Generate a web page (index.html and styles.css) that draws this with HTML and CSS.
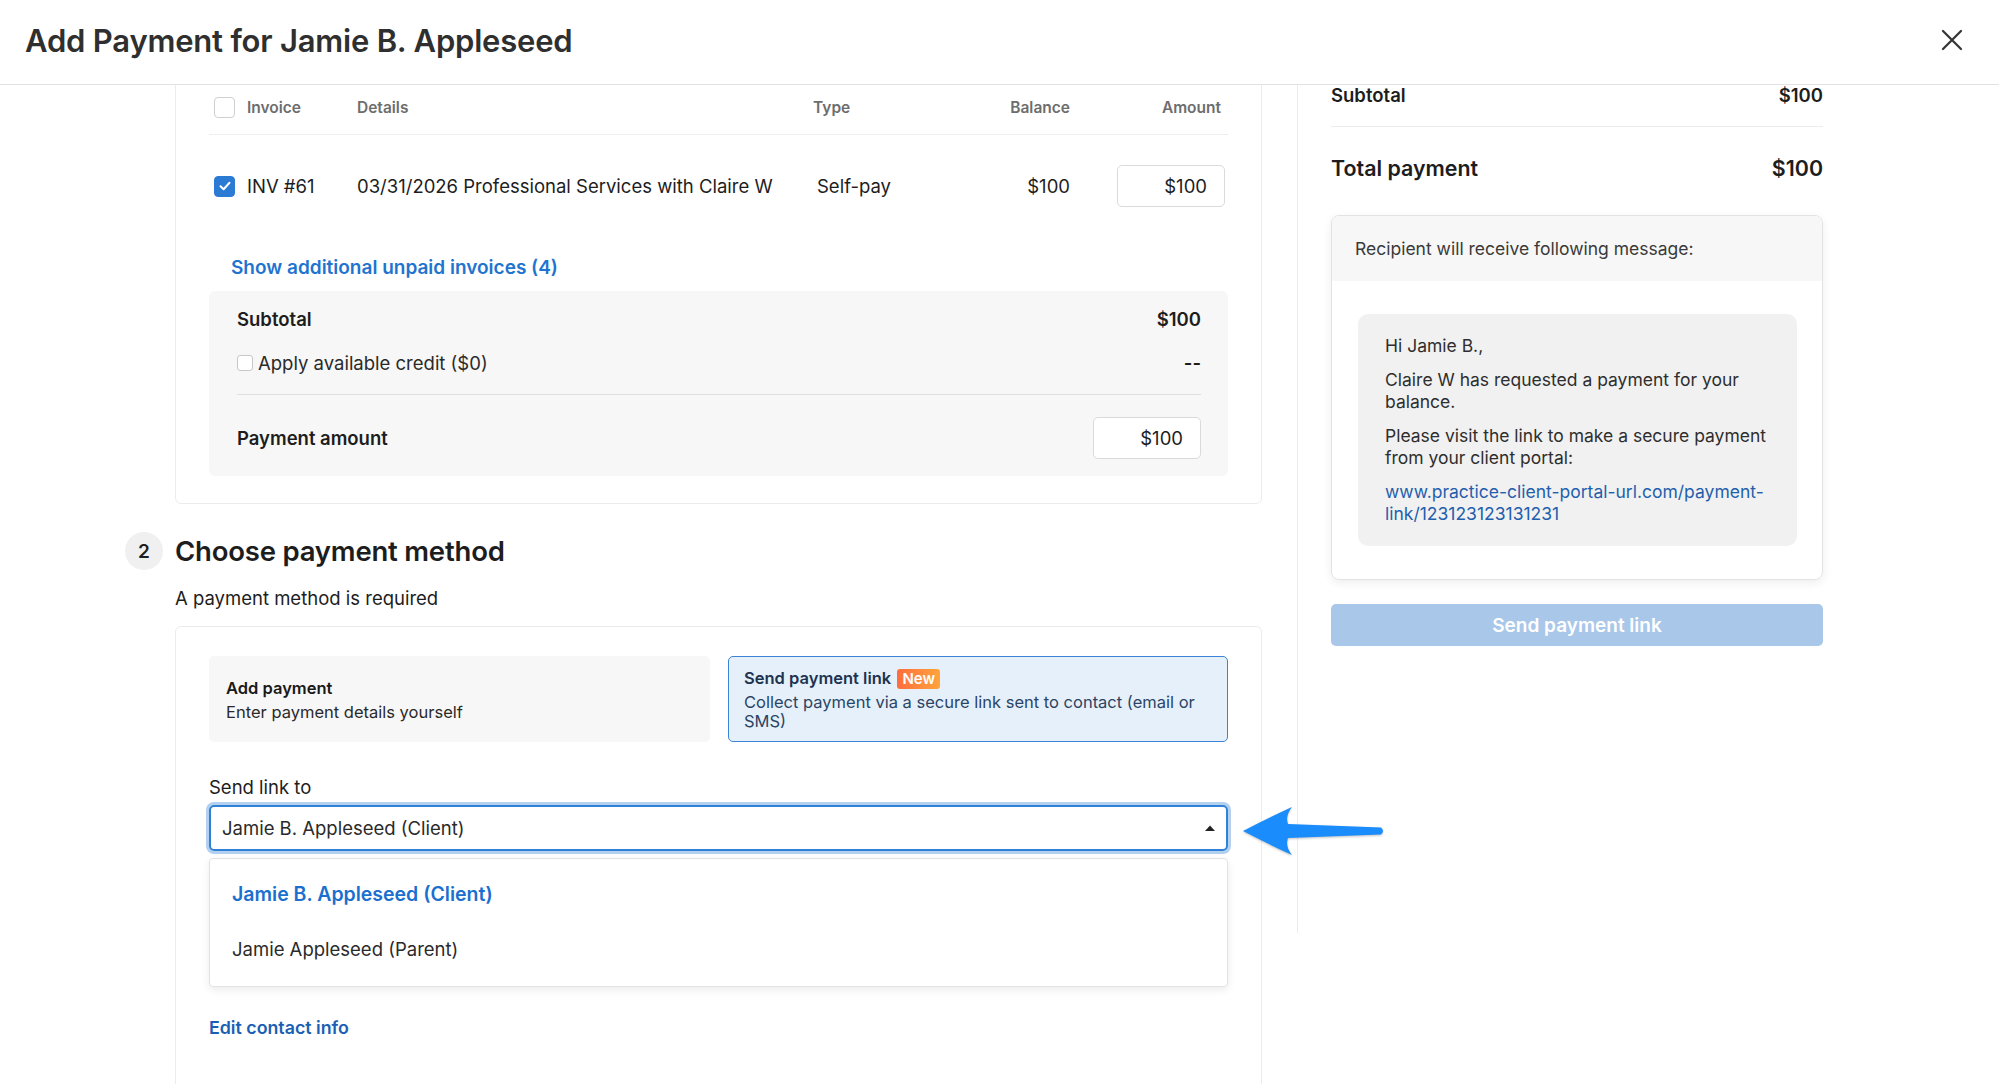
FILE: index.html
```html
<!DOCTYPE html>
<html lang="en">
<head>
    <meta charset="UTF-8">
    <meta name="viewport" content="width=device-width, initial-scale=1.0">
    <title>Add Payment for Jamie B. Appleseed</title>
    <link rel="stylesheet" href="styles.css">
</head>
<body>
    <header class="modal-header">
        <h1>Add Payment for Jamie B. Appleseed</h1>
        <button class="close-btn" aria-label="Close">
            <svg width="22" height="22" viewBox="0 0 22 22"><path d="M2 2 L20 20 M20 2 L2 20" stroke="#333" stroke-width="2.2" stroke-linecap="round"/></svg>
        </button>
    </header>

    <div class="layout">
        <main class="pane">
            <div class="pane-scroll">
                <!-- step 1: invoices -->
                <section class="card invoices">
                    <div class="inv-row inv-head">
                        <span class="cb"></span>
                        <span>Invoice</span>
                        <span>Details</span>
                        <span>Type</span>
                        <span class="num">Balance</span>
                        <span class="num amount-head">Amount</span>
                    </div>
                    <div class="inv-row inv-line">
                        <span class="cb checked">
                            <svg width="14" height="14" viewBox="0 0 14 14"><path d="M2.5 7.2 L5.6 10.2 L11.5 3.8" fill="none" stroke="#fff" stroke-width="2" stroke-linecap="round" stroke-linejoin="round"/></svg>
                        </span>
                        <span>INV #61</span>
                        <span>03/31/2026 Professional Services with Claire W</span>
                        <span class="type">Self-pay</span>
                        <span class="num">$100</span>
                        <span class="num"><span class="money-input">$100</span></span>
                    </div>

                    <a class="more-link" href="#">Show additional unpaid invoices (4)</a>

                    <div class="summary">
                        <div class="sum-row strong">
                            <span>Subtotal</span>
                            <span>$100</span>
                        </div>
                        <div class="sum-row credit">
                            <label><span class="cb small"></span>Apply available credit ($0)</label>
                            <span class="dash">--</span>
                        </div>
                        <div class="sum-row pay">
                            <span>Payment amount</span>
                            <span class="money-input">$100</span>
                        </div>
                    </div>
                </section>

                <!-- step 2: payment method -->
                <div class="step">
                    <span class="step-num">2</span>
                    <h2>Choose payment method</h2>
                </div>
                <p class="step-note">A payment method is required</p>

                <section class="card method">
                    <div class="options">
                        <div class="option">
                            <strong>Add payment</strong>
                            <span>Enter payment details yourself</span>
                        </div>
                        <div class="option selected">
                            <strong>Send payment link <em class="badge">New</em></strong>
                            <span>Collect payment via a secure link sent to contact (email or SMS)</span>
                        </div>
                    </div>

                    <div class="field-label">Send link to</div>
                    <div class="select">
                        <span>Jamie B. Appleseed (Client)</span>
                        <svg width="12" height="8" viewBox="0 0 12 8"><path d="M1 7 L6 1.5 L11 7 Z" fill="#222"/></svg>
                    </div>
                    <ul class="menu">
                        <li class="active">Jamie B. Appleseed (Client)</li>
                        <li>Jamie Appleseed (Parent)</li>
                    </ul>

                    <a class="edit-link" href="#">Edit contact info</a>
                </section>
            </div>
        </main>

        <aside class="side">
            <div class="side-inner">
                <div class="side-row sub">
                    <span>Subtotal</span>
                    <span>$100</span>
                </div>
                <div class="side-row total">
                    <span>Total payment</span>
                    <span>$100</span>
                </div>

                <div class="preview">
                    <div class="preview-head">Recipient will receive following message:</div>
                    <div class="preview-body">
                        <div class="message">
                            <p>Hi Jamie B.,</p>
                            <p>Claire W has requested a payment for your balance.</p>
                            <p>Please visit the link to make a secure payment from your client portal:</p>
                            <p><a href="#">www.practice-client-portal-url.com/payment-link/123123123131231</a></p>
                        </div>
                    </div>
                </div>

                <button class="send-btn" disabled>Send payment link</button>
            </div>
        </aside>
    </div>

    <!-- pointer arrow next to the contact select -->
    <svg class="pointer" width="150" height="62" viewBox="0 0 150 62">
        <path d="M5 31 Q30 18 54 7 Q47 16 50 24 L143 27.5 Q147 31 143 34.5 L50 38 Q47 46 54 55 Q30 44 5 31 Z" fill="#1a8cfb"/>
    </svg>
</body>
</html>
```

FILE: styles.css
```css
body {
    margin: 0;
    font-family: "Inter", "Liberation Sans", sans-serif;
    color: #1d1d1d;
    background: #fff;
}
.modal-header {
    height: 84px;
    border-bottom: 1px solid #e2e2e2;
    display: flex;
    align-items: center;
    justify-content: space-between;
    padding: 0 36px 0 25px;
}
.modal-header h1 {
    margin: 0 0 3px;
    font-size: 31px;
    font-weight: 600;
    color: #2f2f2f;
    letter-spacing: -0.2px;
}
.close-btn {
    border: 0;
    background: none;
    padding: 0;
    width: 22px;
    height: 22px;
    margin-bottom: 4px;
}
.layout {
    display: flex;
    height: calc(100vh - 85px);
    overflow: hidden;
}
.pane {
    flex: 0 0 1297px;
    overflow: hidden;
}
.pane-scroll {
    margin-top: -20px;
    padding: 0 35px 0 125px;
}
.card {
    margin-left: 50px;
    border: 1px solid #ececec;
    border-radius: 6px;
}
.invoices {
    padding: 14px 33px 27px;
}

/* invoice table */
.inv-row {
    display: grid;
    grid-template-columns: 33px 110px 456px 187px 70px 1fr;
    align-items: center;
    padding: 0 3px 0 5px;
    font-size: 18.5px;
}
.inv-head {
    height: 54px;
    border-bottom: 1px solid #eeeeee;
    font-size: 15.5px;
    font-weight: 600;
    color: #6d6d6d;
}
.inv-line {
    height: 102px;
}
.num {
    text-align: right;
}
.amount-head {
    padding-right: 4px;
}
.type {
    padding-left: 4px;
}
.cb {
    display: inline-flex;
    align-items: center;
    justify-content: center;
    width: 19px;
    height: 19px;
    border: 1.5px solid #cfcfcf;
    border-radius: 4px;
    background: #fff;
}
.cb.checked {
    background: #2b7bd4;
    border-color: #2b7bd4;
}
.cb.small {
    width: 14px;
    height: 14px;
    border: 1px solid #c8c8c8;
    border-radius: 3px;
    margin-right: 5px;
}
.money-input {
    display: inline-block;
    box-sizing: border-box;
    width: 108px;
    height: 42px;
    line-height: 40px;
    padding-right: 17px;
    border: 1px solid #dadada;
    border-radius: 5px;
    background: #fff;
    text-align: right;
    font-weight: 400;
}
.more-link {
    display: block;
    margin: 20px 0 0 22px;
    line-height: 22px;
    font-size: 19px;
    font-weight: 600;
    color: #1f74cf;
    text-decoration: none;
}
.summary {
    margin-top: 12px;
    background: #f7f7f7;
    border-radius: 6px;
    padding: 16px 27px 17px 28px;
    font-size: 18.5px;
}
.sum-row {
    display: flex;
    justify-content: space-between;
    align-items: center;
    line-height: 24px;
}
.sum-row.strong {
    font-weight: 600;
}
.sum-row.credit {
    margin-top: 20px;
    padding-bottom: 19px;
    border-bottom: 1px solid #e0e0e0;
}
.sum-row.credit label {
    display: flex;
    align-items: center;
    color: #2a2a2a;
}
.dash {
    font-weight: 600;
}
.sum-row.pay {
    margin-top: 22px;
    font-weight: 600;
}

/* step heading */
.step {
    display: flex;
    align-items: center;
    gap: 12px;
    margin-top: 28px;
}
.step-num {
    width: 38px;
    height: 38px;
    border-radius: 50%;
    background: #f0f0f0;
    display: flex;
    align-items: center;
    justify-content: center;
    font-size: 19px;
    font-weight: 600;
}
.step h2 {
    margin: 0;
    font-size: 27.5px;
    font-weight: 600;
    line-height: 38px;
    letter-spacing: -0.2px;
}
.step-note {
    margin: 16px 0 0 50px;
    line-height: 24px;
    font-size: 18.5px;
}
.method {
    margin-top: 16px;
    padding: 29px 33px 60px;
}
.options {
    display: grid;
    grid-template-columns: 1fr 1fr;
    gap: 18px;
}
.option {
    box-sizing: border-box;
    height: 86px;
    display: flex;
    flex-direction: column;
    justify-content: center;
    gap: 4px;
    padding: 0 24px 0 17px;
    background: #f7f7f7;
    border-radius: 5px;
    font-size: 16.5px;
    color: #2a2a2a;
}
.option strong {
    line-height: 22px;
    font-weight: 600;
    color: #1a1a1a;
}
.option span {
    line-height: 19px;
}
.option.selected {
    background: #e6f0fa;
    border: 1.5px solid #3b83d4;
    padding-left: 15.5px;
    color: #2b4565;
}
.option.selected strong {
    color: #1d3350;
}
.badge {
    display: inline-block;
    font-style: normal;
    font-size: 15px;
    font-weight: 600;
    line-height: 20px;
    padding: 0 5px;
    margin-left: 2px;
    border-radius: 3px;
    color: #fff;
    background: linear-gradient(90deg, #ff6d3d, #ffa43b);
}
.field-label {
    margin-top: 33px;
    line-height: 24px;
    font-size: 18.5px;
}
.select {
    margin-top: 6px;
    box-sizing: border-box;
    height: 46px;
    border: 2px solid #2f80d6;
    border-radius: 5px;
    box-shadow: 0 0 0 3px #b3d0ef;
    display: flex;
    align-items: center;
    justify-content: space-between;
    padding: 0 10px 0 11px;
    font-size: 18.5px;
    color: #2a2a2a;
}
.menu {
    list-style: none;
    margin: 7px 0 0;
    padding: 8px 0 9px;
    border: 1px solid #e2e2e2;
    border-radius: 4px;
    box-shadow: 0 3px 8px rgba(0, 0, 0, 0.08);
    font-size: 18.5px;
}
.menu li {
    height: 55px;
    line-height: 55px;
    padding-left: 22px;
    color: #2a2a2a;
}
.menu li.active {
    color: #1b6fce;
    font-size: 19.5px;
    font-weight: 600;
}
.edit-link {
    display: block;
    margin-top: 29px;
    line-height: 24px;
    font-size: 17.8px;
    font-weight: 600;
    color: #1a5fb4;
    text-decoration: none;
}

/* right summary column */
.side {
    flex: 1;
    align-self: flex-start;
    height: 848px;
    border-left: 1px solid #ececec;
    overflow: hidden;
}
.side-inner {
    width: 492px;
    margin: 0 0 0 33px;
}
.side-row {
    display: flex;
    justify-content: space-between;
    font-weight: 600;
}
.side-row.sub {
    line-height: 20px;
    font-size: 18.5px;
    padding-bottom: 21px;
    border-bottom: 1px solid #ececec;
}
.side-row.total {
    margin-top: 27px;
    line-height: 28px;
    font-size: 21.4px;
}
.preview {
    margin-top: 33px;
    border: 1px solid #e3e3e3;
    border-radius: 8px;
    overflow: hidden;
    box-shadow: 0 3px 10px rgba(0, 0, 0, 0.07);
}
.preview-head {
    height: 65px;
    display: flex;
    align-items: center;
    padding: 0 23px;
    background: #f7f7f7;
    font-size: 17.5px;
    color: #3a3a3a;
}
.preview-body {
    padding: 33px 25px 33px 26px;
}
.message {
    background: #f1f1f1;
    border-radius: 10px;
    padding: 21px 20px 9px 27px;
    font-size: 17.5px;
    line-height: 22px;
    color: #2e2e2e;
}
.message p {
    margin: 0 0 12px;
}
.message a {
    color: #1f5fae;
    text-decoration: none;
}
.send-btn {
    display: block;
    width: 100%;
    height: 42px;
    margin-top: 24px;
    border: 0;
    border-radius: 5px;
    background: #a9c7e9;
    color: #fff;
    font-family: inherit;
    font-size: 19px;
    font-weight: 600;
}
.pointer {
    position: absolute;
    left: 1238px;
    top: 800px;
    filter: drop-shadow(0 1px 1px rgba(0, 0, 0, 0.25));
}
```
